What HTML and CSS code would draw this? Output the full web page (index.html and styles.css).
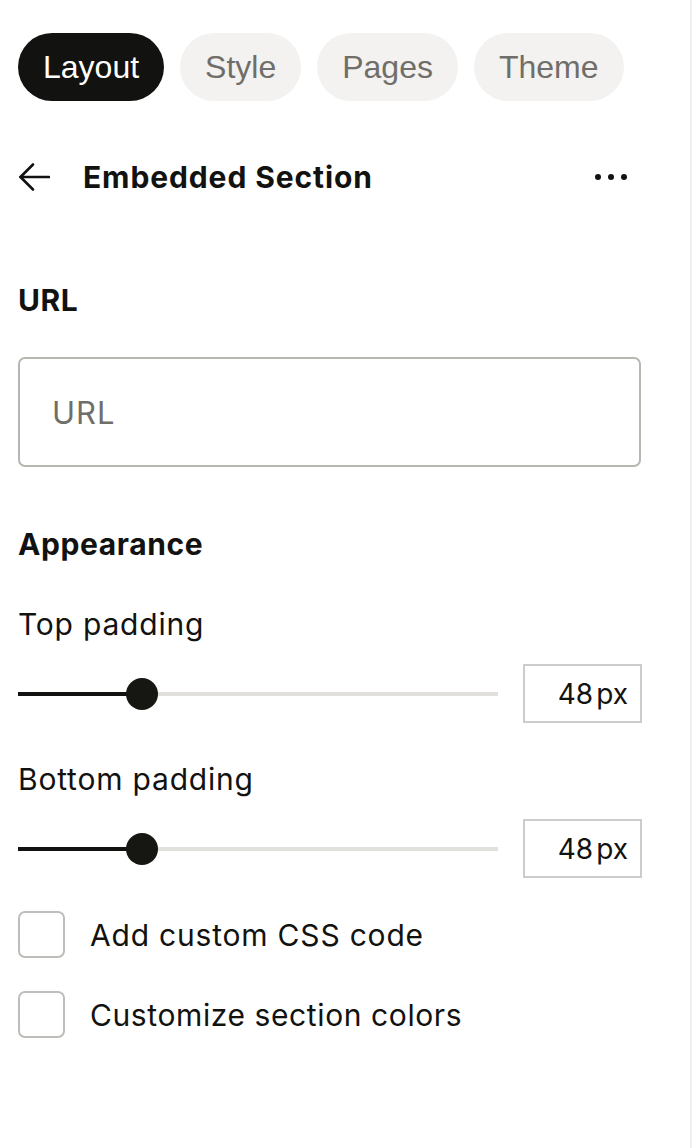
FILE: index.html
```html
<!DOCTYPE html>
<html lang="en">
<head>
<meta charset="utf-8">
<title>Embedded Section</title>
<link rel="stylesheet" href="styles.css">
</head>
<body>
<div class="panel">
  <nav class="tabs">
    <div class="tab tab-active">Layout</div>
    <div class="tab">Style</div>
    <div class="tab">Pages</div>
    <div class="tab">Theme</div>
  </nav>

  <header class="header">
    <svg class="back" width="32" height="32" viewBox="0 0 32 32" fill="none" stroke="#121210" stroke-width="2.6" stroke-linecap="round" stroke-linejoin="round">
      <path d="M31 16H2.5"/>
      <path d="M15 3.5L2.5 16L15 28.5"/>
    </svg>
    <h1 class="title">Embedded Section</h1>
    <div class="more"><span class="dot"></span><span class="dot"></span><span class="dot"></span></div>
  </header>

  <h2 class="heading heading-url">URL</h2>
  <div class="input"><span class="placeholder">URL</span></div>

  <h2 class="heading heading-appearance">Appearance</h2>

  <div class="label label-top">Top padding</div>
  <div class="slider-row">
    <div class="slider">
      <div class="track"></div>
      <div class="fill"></div>
      <div class="thumb"></div>
    </div>
    <div class="value">48<span class="unit">px</span></div>
  </div>

  <div class="label label-bottom">Bottom padding</div>
  <div class="slider-row">
    <div class="slider">
      <div class="track"></div>
      <div class="fill"></div>
      <div class="thumb"></div>
    </div>
    <div class="value">48<span class="unit">px</span></div>
  </div>

  <div class="check check-first"><span class="box"></span><span class="check-label">Add custom CSS code</span></div>
  <div class="check"><span class="box"></span><span class="check-label check-label-2">Customize section colors</span></div>
</div>
</body>
</html>
```

FILE: styles.css
```css
* { box-sizing: border-box; }

html, body {
  margin: 0;
  padding: 0;
  background: #ffffff;
}

body {
  font-family: Inter, "Liberation Sans", Arial, sans-serif;
  color: #121210;
}

.panel {
  width: 692px;
  min-height: 1148px;
  border-right: 2px solid #efefee;
  padding: 33px 0 0 18px;
  display: flex;
  flex-direction: column;
  align-items: flex-start;
}

/* Tabs */
.tabs {
  display: flex;
  gap: 16px;
}

.tab {
  height: 68px;
  padding: 0 25px;
  border-radius: 34px;
  background: #f3f2f0;
  color: #6f6e69;
  font-family: "Liberation Sans", Arial, sans-serif;
  font-size: 32px;
  display: flex;
  align-items: center;
}

.tab-active {
  background: #121210;
  color: #ffffff;
}

/* Header */
.header {
  margin-top: 42px;
  height: 68px;
  width: 624px;
  display: flex;
  align-items: center;
}

.back {
  flex: none;
  display: block;
}

.title {
  margin: 0 0 0 33px;
  font-size: 30px;
  font-weight: 700;
  letter-spacing: 0.9px;
  flex: 1;
}

.more {
  display: flex;
  gap: 7px;
  margin-right: 15px;
}

.dot {
  width: 6px;
  height: 6px;
  border-radius: 50%;
  background: #121210;
}

/* Headings */
.heading {
  margin: 0;
  font-size: 30px;
  font-weight: 700;
  line-height: 36px;
  letter-spacing: 0.6px;
}

.heading-url { margin-top: 71px; }
.heading-appearance { margin-top: 59px; }

/* Input */
.input {
  margin-top: 39px;
  width: 623px;
  height: 110px;
  border: 2px solid #b7b6b1;
  border-radius: 7px;
  padding-left: 32px;
  display: flex;
  align-items: center;
}

.placeholder {
  font-size: 31px;
  letter-spacing: 1px;
  color: #6f6e69;
}

/* Labels */
.label {
  font-size: 30px;
  line-height: 36px;
  letter-spacing: 0.8px;
}

.label-top { margin-top: 44px; }
.label-bottom { margin-top: 38px; }

/* Slider */
.slider-row {
  margin-top: 22px;
  width: 624px;
  display: flex;
  align-items: center;
  gap: 25px;
}

.slider {
  position: relative;
  width: 480px;
  height: 32px;
}

.track {
  position: absolute;
  left: 0;
  right: 0;
  top: 14px;
  height: 4px;
  background: #e1e0dd;
}

.fill {
  position: absolute;
  left: 0;
  top: 14px;
  width: 124px;
  height: 4px;
  background: #121210;
}

.thumb {
  position: absolute;
  left: 108px;
  top: 0;
  width: 32px;
  height: 32px;
  border-radius: 50%;
  background: #161612;
}

.value {
  width: 119px;
  height: 59px;
  border: 2px solid #cccccc;
  display: flex;
  align-items: center;
  justify-content: flex-end;
  padding-right: 12px;
  font-size: 28px;
}

.unit {
  margin-left: 3px;
}

/* Checkboxes */
.check {
  margin-top: 33px;
  display: flex;
  align-items: center;
  gap: 25px;
}

.box {
  width: 47px;
  height: 47px;
  border: 2px solid #bebdb9;
  border-radius: 7px;
  flex: none;
}

.check-label {
  font-size: 30px;
  letter-spacing: 0.8px;
}

.check-label-2 {
  letter-spacing: 0.6px;
}
```
